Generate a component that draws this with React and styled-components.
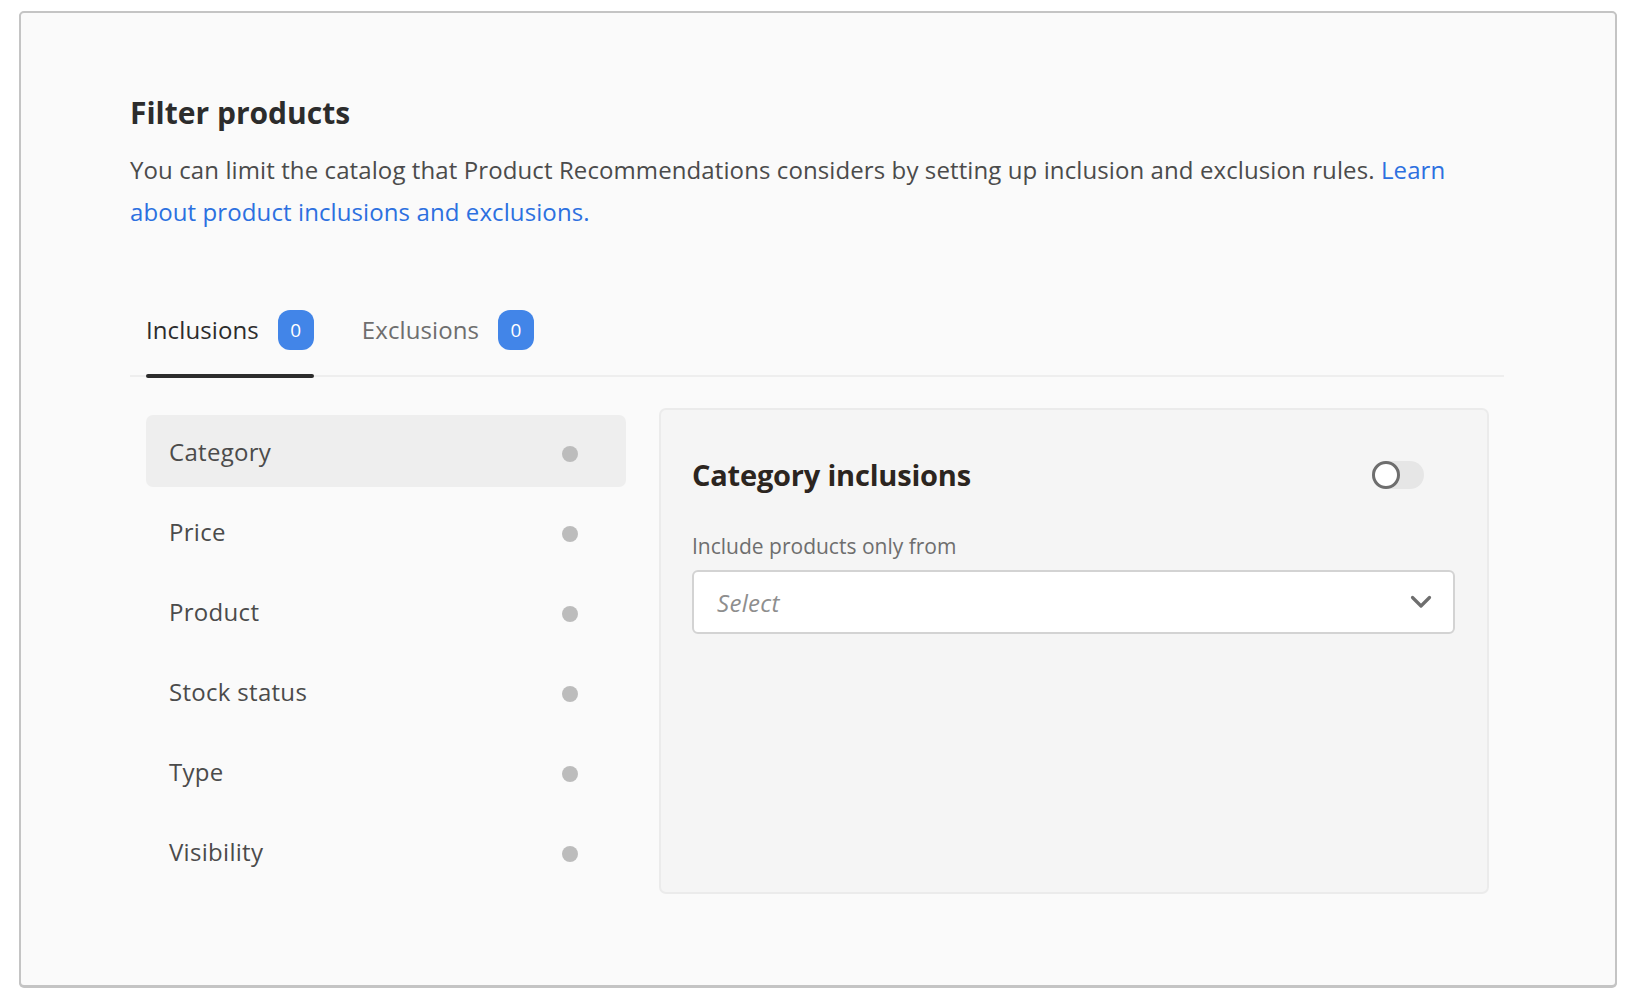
import React from 'react';
import styled, { createGlobalStyle } from 'styled-components';

const GlobalStyle = createGlobalStyle`
  html, body {
    margin: 0;
    padding: 0;
    background: #ffffff;
    font-family: "Open Sans", "Noto Sans", sans-serif;
  }
  * {
    box-sizing: border-box;
  }
`;

const Page = styled.div`
  padding: 11px 13px 17px 19px;
`;

const Card = styled.section`
  background: #fafafa;
  border: 2px solid #c4c4c4;
  border-radius: 5px;
  box-shadow: 0 1px 0 #c4c4c4;
  height: 976px;
  padding: 78px 111px 0 109px;
`;

const Title = styled.h2`
  margin: 0;
  font-size: 30px;
  line-height: 44px;
  font-weight: 700;
  color: #2c2c2c;
`;

const Intro = styled.p`
  max-width: 1345px;
  margin: 14px 0 0;
  font-size: 24px;
  line-height: 42px;
  color: #4b4b4b;
  letter-spacing: 0.1px;
`;

const Link = styled.a`
  color: #2c70e0;
  text-decoration: none;
`;

const TabList = styled.div`
  display: flex;
  gap: 48px;
  margin-top: 65px;
  padding-left: 16px;
  border-bottom: 2px solid #eeeeee;
`;

const Tab = styled.div`
  position: relative;
  display: flex;
  align-items: center;
  gap: 19px;
  height: 77px;
  padding-bottom: 14px;
  font-size: 24px;
  letter-spacing: 0.1px;
  color: ${(props) => (props.active ? '#2c2c2c' : '#6e6e6e')};

  &::after {
    content: '';
    display: ${(props) => (props.active ? 'block' : 'none')};
    position: absolute;
    left: 0;
    right: 0;
    bottom: -3px;
    height: 4px;
    border-radius: 2px;
    background: #2c2c2c;
  }
`;

const Badge = styled.span`
  display: inline-flex;
  align-items: center;
  justify-content: center;
  width: 36px;
  height: 40px;
  border-radius: 12px;
  background: #4285e8;
  color: #ffffff;
  font-size: 19px;
`;

const Body = styled.div`
  display: flex;
  gap: 33px;
  padding: 31px 15px 0 16px;
`;

const SideList = styled.ul`
  list-style: none;
  margin: 7px 0 0;
  padding: 0;
  width: 480px;
  display: flex;
  flex-direction: column;
  gap: 8px;
`;

const SideItem = styled.li`
  display: flex;
  align-items: center;
  justify-content: space-between;
  height: 72px;
  padding: 0 48px 0 23px;
  border-radius: 7px;
  background: ${(props) => (props.active ? '#eeeeee' : 'transparent')};
  font-size: 24px;
  letter-spacing: 0.3px;
  color: #4b4b4b;
`;

const Dot = styled.span`
  width: 16px;
  height: 16px;
  margin-top: 5px;
  border-radius: 50%;
  background: #bcbcbc;
`;

const Panel = styled.div`
  flex: 1;
  height: 486px;
  background: #f5f5f5;
  border: 2px solid #ebebeb;
  border-radius: 7px;
  padding: 43px 32px 0 31px;
`;

const PanelHeader = styled.div`
  display: flex;
  align-items: center;
  justify-content: space-between;
  padding-right: 31px;
`;

const PanelTitle = styled.h3`
  margin: 0;
  font-size: 29px;
  line-height: 44px;
  font-weight: 700;
  color: #2c2520;
  letter-spacing: -0.2px;
`;

const Switch = styled.div`
  position: relative;
  width: 52px;
  height: 28px;
  border-radius: 14px;
  background: #e6e6e6;
`;

const Knob = styled.span`
  position: absolute;
  left: 0;
  top: 0;
  width: 28px;
  height: 28px;
  border-radius: 50%;
  background: #ffffff;
  border: 3px solid #6e6e6e;
`;

const FieldLabel = styled.div`
  margin-top: 35px;
  font-size: 21px;
  line-height: 28px;
  color: #6e6e6e;
`;

const SelectBox = styled.div`
  display: flex;
  align-items: center;
  justify-content: space-between;
  margin-top: 10px;
  height: 64px;
  background: #ffffff;
  border: 2px solid #d3d3d3;
  border-radius: 6px;
  padding: 0 21px 0 23px;
`;

const Placeholder = styled.span`
  font-size: 24px;
  font-style: italic;
  letter-spacing: 0.3px;
  color: #8e8e8e;
`;

const Chevron = () => (
  <svg width="22" height="14" viewBox="0 0 22 14" fill="none">
    <polyline
      points="2.5,2.5 11,11 19.5,2.5"
      stroke="#6e6e6e"
      strokeWidth="3.2"
      strokeLinecap="round"
      strokeLinejoin="round"
    />
  </svg>
);

const filters = ['Category', 'Price', 'Product', 'Stock status', 'Type', 'Visibility'];

const App = () => (
  <>
    <GlobalStyle />
    <Page>
      <Card>
        <Title>Filter products</Title>
        <Intro>
          You can limit the catalog that Product Recommendations considers by setting up inclusion and
          exclusion rules. <Link href="#">Learn about product inclusions and exclusions.</Link>
        </Intro>

        <TabList>
          <Tab active>
            Inclusions <Badge>0</Badge>
          </Tab>
          <Tab>
            Exclusions <Badge>0</Badge>
          </Tab>
        </TabList>

        <Body>
          <SideList>
            {filters.map((name, idx) => (
              <SideItem key={name} active={idx === 0}>
                {name}
                <Dot />
              </SideItem>
            ))}
          </SideList>

          <Panel>
            <PanelHeader>
              <PanelTitle>Category inclusions</PanelTitle>
              <Switch>
                <Knob />
              </Switch>
            </PanelHeader>
            <FieldLabel>Include products only from</FieldLabel>
            <SelectBox>
              <Placeholder>Select</Placeholder>
              <Chevron />
            </SelectBox>
          </Panel>
        </Body>
      </Card>
    </Page>
  </>
);

export default App;
